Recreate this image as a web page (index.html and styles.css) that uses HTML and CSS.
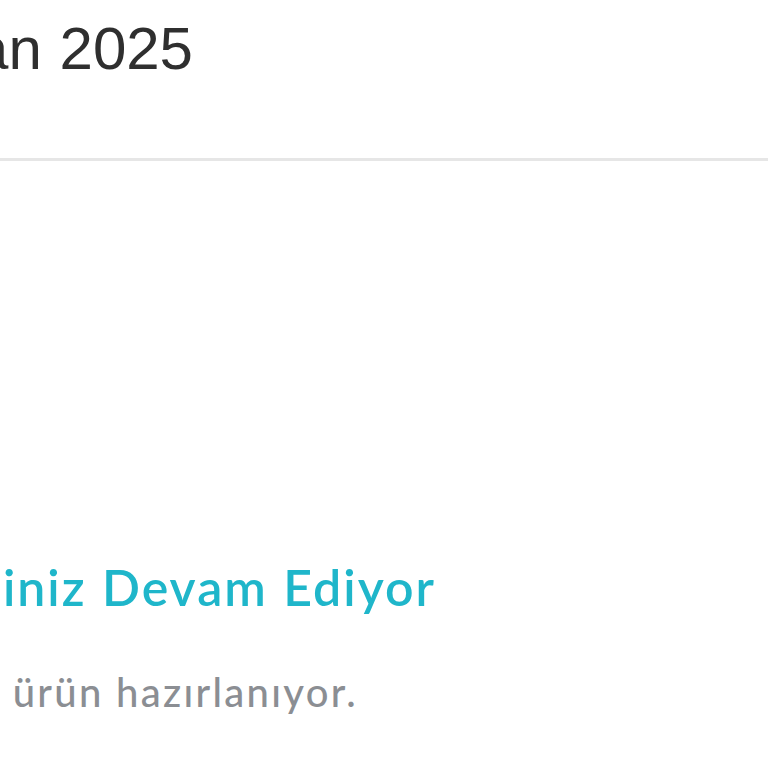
FILE: index.html
```html
<!DOCTYPE html>
<html lang="tr">
<head>
<meta charset="utf-8">
<title>Sipariş Durumu</title>
<link rel="stylesheet" href="styles.css">
</head>
<body>
<div class="page">
  <header class="order-head">
    <div class="line date-line"><span class="date">Haziran 2025</span></div>
  </header>
  <section class="status">
    <div class="line title-line"><h1 class="status-title">Siparişiniz Devam Ediyor</h1></div>
    <div class="line sub-line"><p class="status-sub">Siparişinizdeki ürün hazırlanıyor.</p></div>
  </section>
</div>
</body>
</html>
```

FILE: styles.css
```css
html, body {
  margin: 0;
  padding: 0;
  background: #ffffff;
  overflow: hidden;
}
.page {
  width: 768px;
  height: 768px;
  overflow: hidden;
}
.line {
  display: flex;
  justify-content: flex-end;
  white-space: nowrap;
}
.order-head {
  padding-top: 19px;
  box-sizing: border-box;
  height: 161px;
  border-bottom: 3px solid #e6e6e6;
}
.date-line { width: 193px; }
.date {
  font-family: "Liberation Sans", Arial, sans-serif;
  font-size: 60px;
  line-height: 60px;
  word-spacing: 1px;
  color: #2f2f2f;
}
.status {
  padding-top: 397px;
}
.title-line { width: 436px; }
.status-title {
  margin: 0;
  font-family: Lato, "Noto Sans", sans-serif;
  font-weight: 600;
  font-size: 50px;
  line-height: 59px;
  letter-spacing: 2px;
  word-spacing: 1px;
  color: #1fb6ca;
}
.sub-line { width: 358px; margin-top: 51px; }
.status-sub {
  margin: 0;
  font-family: Lato, "Noto Sans", sans-serif;
  font-weight: 500;
  font-size: 40px;
  line-height: 48px;
  letter-spacing: 2.3px;
  color: #8b8e93;
}
```
